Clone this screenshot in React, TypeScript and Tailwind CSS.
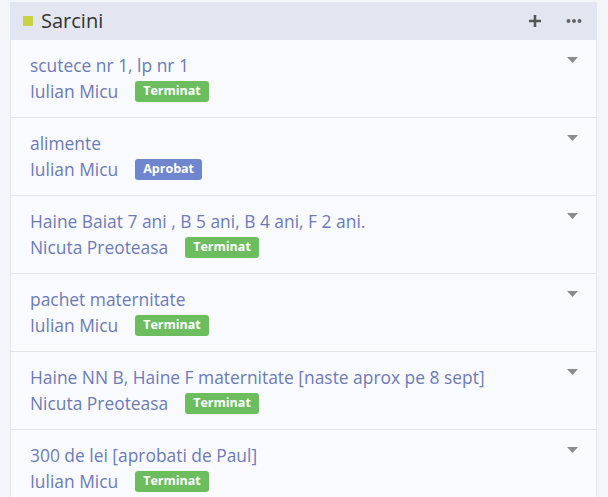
const tasks = [
  { title: "scutece nr 1, lp nr 1", owner: "Iulian Micu", status: "Terminat" },
  { title: "alimente", owner: "Iulian Micu", status: "Aprobat" },
  { title: "Haine Baiat 7 ani , B 5 ani, B 4 ani, F 2 ani.", owner: "Nicuta Preoteasa", status: "Terminat" },
  { title: "pachet maternitate", owner: "Iulian Micu", status: "Terminat" },
  { title: "Haine NN B, Haine F maternitate [naste aprox pe 8 sept]", owner: "Nicuta Preoteasa", status: "Terminat" },
  { title: "300 de lei [aprobati de Paul]", owner: "Iulian Micu", status: "Terminat" },
];

function StatusBadge({ status }: { status: string }) {
  const color = status === "Aprobat" ? "bg-[#6f86cf]" : "bg-[#6cbd5e]";
  return (
    <span
      className={`ml-[17px] inline-flex h-[21px] items-center rounded-[3px] px-[8px] text-[12.5px] font-bold leading-none text-white ${color}`}
    >
      {status}
    </span>
  );
}

export default function App() {
  return (
    <div
      className="h-[497px] w-[608px] overflow-hidden bg-[#f4f5f9] pl-[10px] pr-[11px] pt-[2px]"
      style={{ fontFamily: '"Open Sans", "Noto Sans", sans-serif' }}
    >
      <div className="border-x border-[#e2e4ec] bg-[#f9fafd]">
        <div className="flex h-[38px] items-center bg-[#e3e6f1] pl-[12px] pr-[14px]">
          <span className="h-[10px] w-[10px] bg-[#c6d344]" />
          <span className="ml-[8px] text-[20px] leading-none text-[#333]">Sarcini</span>
          <div className="ml-auto flex items-center gap-[24px] text-[#555]">
            <svg width="14" height="14" viewBox="0 0 14 14">
              <path d="M7 1v12M1 7h12" stroke="#555" strokeWidth="2.6" />
            </svg>
            <svg width="16" height="6" viewBox="0 0 16 6">
              <circle cx="2.5" cy="3" r="2" fill="#666" />
              <circle cx="8" cy="3" r="2" fill="#666" />
              <circle cx="13.5" cy="3" r="2" fill="#666" />
            </svg>
          </div>
        </div>
        {tasks.map((t, i) => (
          <div
            key={i}
            className="relative border-b border-[#e3e5ec] pb-[13px] pl-[19px] pr-[40px] pt-[12px] text-[17.4px] leading-[26px] text-[#6c7bb8]"
          >
            <div>{t.title}</div>
            <div className="flex items-center">
              <span>{t.owner}</span>
              <StatusBadge status={t.status} />
            </div>
            <svg
              className="absolute right-[18px] top-[17px]"
              width="11"
              height="6"
              viewBox="0 0 11 6"
            >
              <path d="M0 0h11L5.5 6z" fill="#8a8a8f" />
            </svg>
          </div>
        ))}
      </div>
    </div>
  );
}
